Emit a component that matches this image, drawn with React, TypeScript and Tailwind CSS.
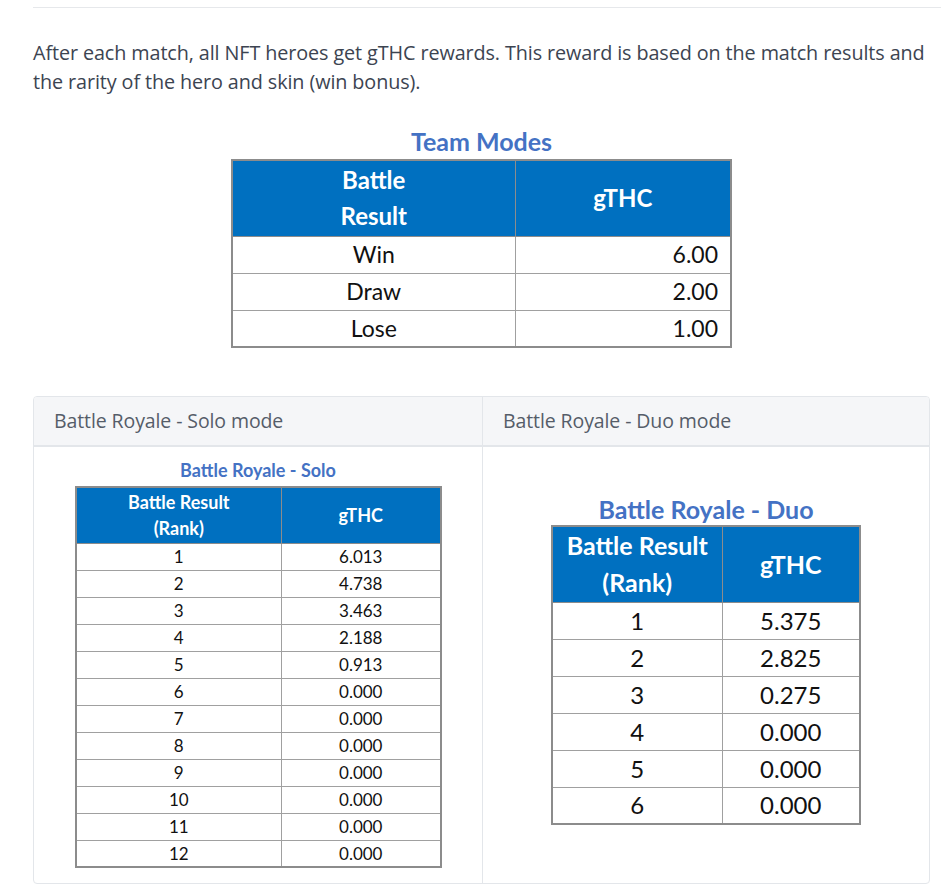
import React from 'react';

const xl = { fontFamily: 'Lato, "Liberation Sans", sans-serif' };

const soloRows = [
  ['1', '6.013'],
  ['2', '4.738'],
  ['3', '3.463'],
  ['4', '2.188'],
  ['5', '0.913'],
  ['6', '0.000'],
  ['7', '0.000'],
  ['8', '0.000'],
  ['9', '0.000'],
  ['10', '0.000'],
  ['11', '0.000'],
  ['12', '0.000'],
];

const duoRows = [
  ['1', '5.375'],
  ['2', '2.825'],
  ['3', '0.275'],
  ['4', '0.000'],
  ['5', '0.000'],
  ['6', '0.000'],
];

const teamRows = [
  ['Win', '6.00'],
  ['Draw', '2.00'],
  ['Lose', '1.00'],
];

function TeamModes() {
  return (
    <div className="flex flex-col items-center mt-[27px]" style={xl}>
      <h3 className="text-[25px] font-bold text-[#4472c4] leading-[36px]">Team Modes</h3>
      <table className="border-collapse border-2 border-[#8c8c8c] text-[23px] text-[#111]">
        <thead>
          <tr className="bg-[#0070c0] text-white h-[76px]">
            <th className="w-[283px] border border-[#8c8c8c] text-[24px] font-bold leading-[36px] px-[96px]">
              Battle Result
            </th>
            <th className="w-[216px] border border-[#8c8c8c] text-[24px] font-bold">gTHC</th>
          </tr>
        </thead>
        <tbody>
          {teamRows.map(([r, v]) => (
            <tr key={r} className="h-[37px]">
              <td className="border border-[#a0a0a0] text-center leading-none">{r}</td>
              <td className="border border-[#a0a0a0] text-right pr-[12px] leading-none">{v}</td>
            </tr>
          ))}
        </tbody>
      </table>
    </div>
  );
}

function SoloTable() {
  return (
    <div className="flex flex-col items-center" style={xl}>
      <h4 className="text-[18px] font-bold text-[#4472c4] leading-[20px] mb-[6px]">Battle Royale - Solo</h4>
      <table className="border-collapse border-2 border-[#8c8c8c] text-[17px] text-[#111]">
        <thead>
          <tr className="bg-[#0070c0] text-white h-[56px]">
            <th className="w-[206px] border border-[#8c8c8c] text-[18px] font-bold leading-[26px]">
              Battle Result
              <br />
              (Rank)
            </th>
            <th className="w-[159px] border border-[#8c8c8c] text-[18px] font-bold">gTHC</th>
          </tr>
        </thead>
        <tbody>
          {soloRows.map(([r, v]) => (
            <tr key={r} className="h-[27px]">
              <td className="border border-[#a0a0a0] text-center leading-none">{r}</td>
              <td className="border border-[#a0a0a0] text-center leading-none">{v}</td>
            </tr>
          ))}
        </tbody>
      </table>
    </div>
  );
}

function DuoTable() {
  return (
    <div className="flex flex-col items-center" style={xl}>
      <h4 className="text-[25px] font-bold text-[#4472c4] leading-[28px] mb-[2px]">Battle Royale - Duo</h4>
      <table className="border-collapse border-2 border-[#8c8c8c] text-[24px] text-[#111]">
        <thead>
          <tr className="bg-[#0070c0] text-white h-[76px]">
            <th className="w-[170px] border border-[#8c8c8c] text-[25px] font-bold leading-[37px]">
              Battle Result
              <br />
              (Rank)
            </th>
            <th className="w-[138px] border border-[#8c8c8c] text-[25px] font-bold">gTHC</th>
          </tr>
        </thead>
        <tbody>
          {duoRows.map(([r, v]) => (
            <tr key={r} className="h-[37px]">
              <td className="border border-[#a0a0a0] text-center leading-none">{r}</td>
              <td className="border border-[#a0a0a0] text-center leading-none">{v}</td>
            </tr>
          ))}
        </tbody>
      </table>
    </div>
  );
}

export default function App() {
  return (
    <div className="bg-white min-h-[893px] pt-[7px]" style={{ fontFamily: '"Open Sans", sans-serif' }}>
      <div className="ml-[33px] border-t border-[#e6e8eb]" />

      <div className="pl-[33px] pr-[11px]">
        <p className="mt-[30px] text-[19.8px] leading-[29px] text-[#3c4451] max-w-[897px] tracking-[-0.1px]">
          After each match, all NFT heroes get gTHC rewards. This reward is based on the match results and the rarity
          of the hero and skin (win bonus).
        </p>

        <TeamModes />

        <div className="mt-[48px] w-[897px] border border-[#e3e6ea] rounded-[4px] overflow-hidden">
          <div className="grid grid-cols-[449px_1fr] bg-[#f5f6f8] border-b-2 border-[#e3e6ea] h-[50px]">
            <div className="flex items-center pl-[20px] text-[19.5px] text-[#555d69] border-r border-[#e3e6ea] tracking-[-0.1px]">
              Battle Royale - Solo mode
            </div>
            <div className="flex items-center pl-[20px] text-[19.5px] text-[#555d69] tracking-[-0.1px]">
              Battle Royale - Duo mode
            </div>
          </div>
          <div className="grid grid-cols-[449px_1fr] h-[436px]">
            <div className="flex items-center justify-center border-r border-[#e3e6ea] pb-[2px]">
              <SoloTable />
            </div>
            <div className="flex items-center justify-center pb-[10px]">
              <DuoTable />
            </div>
          </div>
        </div>
      </div>
    </div>
  );
}
